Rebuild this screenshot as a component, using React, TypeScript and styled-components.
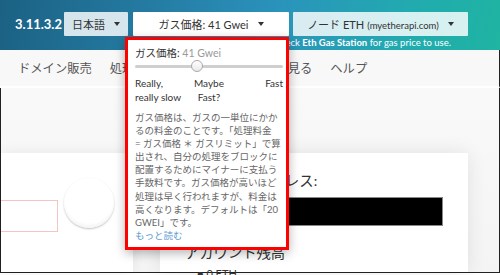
import styled, { createGlobalStyle } from "styled-components"

const GlobalStyle = createGlobalStyle`
    html, body {
        margin: 0;
        padding: 0;
        background: #fff;
    }
    body {
        font-family: Lato, "Noto Sans CJK JP", sans-serif;
    }
`

const Page = styled.div`
    position: relative;
    width: 500px;
    height: 275px;
    overflow: hidden;
    font-family: Lato, "Noto Sans CJK JP", sans-serif;
    color: #333;
`

const Header = styled.header`
    height: 50px;
    box-sizing: border-box;
    padding: 12px 0 0 15px;
    display: flex;
    align-items: flex-start;
    background: linear-gradient(100deg, #1b6183 0%, #2680a8 35%, #2a93bb 55%, #22aab0 80%, #1fb4a2 100%);
`

const Version = styled.span`
    color: #fff;
    font-size: 13px;
    font-weight: 700;
    line-height: 24px;
    margin-right: 2px;
`

const Controls = styled.div`
    display: flex;
    flex-direction: column;
`

const ButtonRow = styled.div`
    display: flex;
    gap: 4px;
`

const Dropdown = styled.button<{ $width: number; $open?: boolean }>`
    width: ${(p) => p.$width}px;
    height: 24px;
    box-sizing: border-box;
    padding: 0;
    margin: 0;
    display: flex;
    align-items: center;
    justify-content: center;
    gap: 9px;
    border: none;
    border-radius: 1px;
    background: ${(p) => (p.$open ? "#fff" : "rgba(255, 255, 255, 0.82)")};
    font-family: inherit;
    font-size: 11px;
    color: #333;
`

const Small = styled.span`
    font-size: 9.5px;
    margin-left: 3px;
`

const Caret = styled.span`
    width: 0;
    height: 0;
    border-top: 4px solid #333;
    border-left: 3px solid transparent;
    border-right: 3px solid transparent;
`

const Note = styled.p`
    margin: 0 17px 0 0;
    align-self: flex-end;
    font-size: 9.5px;
    line-height: 13px;
    color: #fff;

    b {
        font-weight: 700;
    }
`

const Nav = styled.nav`
    height: 38px;
    box-sizing: border-box;
    display: flex;
    align-items: center;
    gap: 18px;
    padding-left: 18px;
    background: #f8f8f8;
    border-bottom: 2px solid #fff;
    border-right: 1px solid #222;
    font-size: 12.3px;
    color: #555;
    white-space: nowrap;
`

const Main = styled.main`
    height: 185px;
    box-sizing: border-box;
    padding-top: 65px;
    display: flex;
    gap: 27px;
    background: linear-gradient(#f9f9f9, #f4f4f4);
    border: 1px solid #222;
    border-top: none;
`

const SidePanel = styled.section`
    width: 132px;
    flex-shrink: 0;
    box-sizing: border-box;
    padding-top: 25px;
    display: flex;
    align-items: flex-start;
    gap: 6px;
    background: #fff;
    box-shadow: 0 0 12px rgba(0, 0, 0, 0.07);
`

const KeyBox = styled.div`
    width: 57px;
    height: 32px;
    margin-top: 22px;
    box-sizing: border-box;
    border: 1px solid #f7c4c4;
    border-left: none;
`

const Identicon = styled.div`
    width: 50px;
    height: 50px;
    border-radius: 50%;
    background: radial-gradient(circle at 50% 42%, #fff 0%, #fff 62%, #ececec 84%, #cfcfcf 100%);
    box-shadow: 0 1px 2px rgba(0, 0, 0, 0.25);
`

const Card = styled.section`
    width: 308px;
    flex-shrink: 0;
    box-sizing: border-box;
    padding: 18px 25px 0;
    background: #fff;
    box-shadow: 0 0 18px rgba(0, 0, 0, 0.09);
`

const CardLabel = styled.h3`
    margin: 0;
    font-size: 14.3px;
    font-weight: 400;
    line-height: 20px;
    color: #333;
`

const Redacted = styled.div`
    height: 29px;
    margin: 6px 0 17px;
    box-sizing: border-box;
    background: #000;
    border: 1px solid #888;
`

const BalanceLine = styled.div`
    margin: 4px 0 0 12px;
    font-size: 11px;
    line-height: 14px;
    color: #333;
`

const GasMenu = styled.div`
    position: absolute;
    left: 125px;
    top: 37px;
    width: 164px;
    box-sizing: border-box;
    padding: 6px 3px 5px 7px;
    background: #fff;
    border: 3px solid #f00;
    box-shadow: 0 3px 10px rgba(0, 0, 0, 0.3);
`

const MenuTitle = styled.div`
    font-size: 10.5px;
    line-height: 14px;
    color: #333;

    span {
        color: #999;
    }
`

const Slider = styled.div`
    position: relative;
    height: 12px;
    display: flex;
    align-items: center;
`

const Track = styled.div`
    width: 100%;
    height: 3px;
    border-radius: 2px;
    background: #cfcfcf;
`

const Thumb = styled.div`
    position: absolute;
    top: 0;
    width: 12px;
    height: 12px;
    box-sizing: border-box;
    border-radius: 50%;
    border: 1px solid #aaa;
    background: linear-gradient(#fff, #e9e9e9);
`

const Scale = styled.div`
    margin-top: 4px;
    display: grid;
    grid-template-columns: 1fr auto 1fr;
    font-size: 10px;
    line-height: 14px;
    color: #333;
`

const ScaleLabel = styled.span<{ $align: "left" | "center" | "right" }>`
    text-align: ${(p) => p.$align};
`

const Help = styled.p`
    margin: 7px 0 0;
    font-size: 9.5px;
    line-height: 13.1px;
    color: #666;
    white-space: nowrap;
`

const MoreLink = styled.a`
    display: block;
    color: #5d9bd1;
    text-decoration: none;
`

const gasPrice = 41
const sliderPos = 42

export default function App() {
    return (
        <>
            <GlobalStyle />
            <Page>
                <Header>
                    <Version>3.11.3.2</Version>
                    <Controls>
                        <ButtonRow>
                            <Dropdown $width={64} style={{ marginRight: 1 }}>
                                日本語 <Caret />
                            </Dropdown>
                            <Dropdown $width={156} $open>
                                ガス価格: {gasPrice} Gwei <Caret />
                            </Dropdown>
                            <Dropdown $width={175}>
                                <span>
                                    ノード ETH<Small>(myetherapi.com)</Small>
                                </span>
                                <Caret />
                            </Dropdown>
                        </ButtonRow>
                        <Note>
                            Check <b>Eth Gas Station</b> for gas price to use.
                        </Note>
                    </Controls>
                </Header>

                <Nav>
                    <span>ドメイン販売</span>
                    <span>処理状況</span>
                    <span>ウォレットの情報を見る</span>
                    <span>ヘルプ</span>
                </Nav>

                <Main>
                    <SidePanel>
                        <KeyBox />
                        <Identicon />
                    </SidePanel>
                    <Card>
                        <CardLabel>アカウントアドレス:</CardLabel>
                        <Redacted />
                        <CardLabel>アカウント残高</CardLabel>
                        <BalanceLine>● 0 ETH</BalanceLine>
                    </Card>
                </Main>

                <GasMenu>
                    <MenuTitle>
                        ガス価格: <span>{gasPrice} Gwei</span>
                    </MenuTitle>
                    <Slider>
                        <Track />
                        <Thumb style={{ left: `calc(${sliderPos}% - 6px)` }} />
                    </Slider>
                    <Scale>
                        <ScaleLabel $align="left">
                            Really,
                            <br />
                            really slow
                        </ScaleLabel>
                        <ScaleLabel $align="center">
                            Maybe
                            <br />
                            Fast?
                        </ScaleLabel>
                        <ScaleLabel $align="right">Fast</ScaleLabel>
                    </Scale>
                    <Help>
                        ガス価格は、ガスの一単位にかか
                        <br />
                        るの料金のことです。「処理料金
                        <br />= ガス価格 ＊ ガスリミット」で算
                        <br />
                        出され、自分の処理をブロックに
                        <br />
                        配置するためにマイナーに支払う
                        <br />
                        手数料です。ガス価格が高いほど
                        <br />
                        処理は早く行われますが、料金は
                        <br />
                        高くなります。デフォルトは「20
                        <br />
                        GWEI」です。
                        <MoreLink href="#">もっと読む</MoreLink>
                    </Help>
                </GasMenu>
            </Page>
        </>
    )
}
